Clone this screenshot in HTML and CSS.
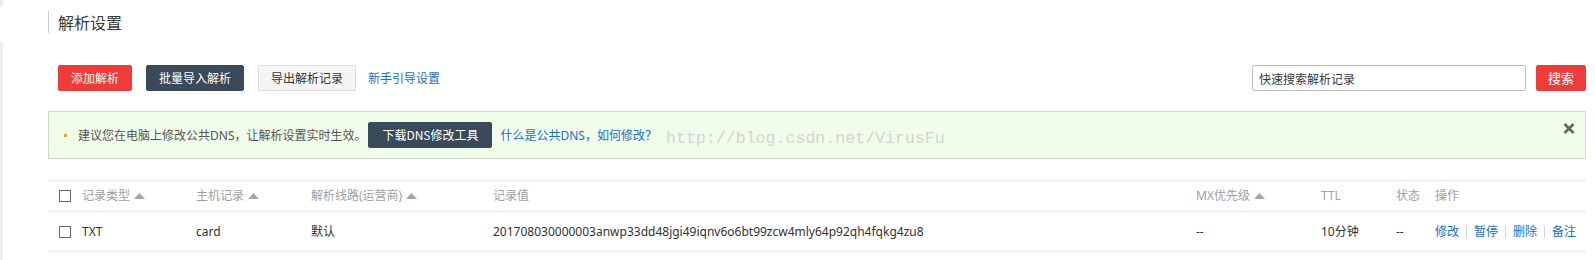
FILE: index.html
```html
<!DOCTYPE html>
<html lang="zh-CN">
<head>
<meta charset="utf-8">
<title>解析设置</title>
<link rel="stylesheet" href="styles.css">
</head>
<body>
<div class="frame">
  <div class="rail"><div class="rail-top"></div><div class="rail-bottom"></div></div>
  <main class="main">
    <h1 class="title">解析设置</h1>

    <div class="toolbar">
      <button class="btn btn-red">添加解析</button>
      <button class="btn btn-dark">批量导入解析</button>
      <button class="btn btn-light">导出解析记录</button>
      <a class="link guide">新手引导设置</a>
      <div class="search">
        <input class="search-input" type="text" placeholder="快速搜索解析记录">
        <button class="btn btn-red btn-search">搜索</button>
      </div>
    </div>

    <div class="alert">
      <span class="bullet"></span>
      <span class="alert-text">建议您在电脑上修改公共DNS，让解析设置实时生效。</span>
      <button class="btn btn-dark btn-tool">下载DNS修改工具</button>
      <a class="link alert-link">什么是公共DNS，如何修改？</a>
      <span class="watermark">http://blog.csdn.net/VirusFu</span>
      <span class="close">
        <svg width="12" height="11" viewBox="0 0 12 11"><path d="M1.5 1 L10.5 10 M10.5 1 L1.5 10" stroke="#666" stroke-width="2.6" stroke-linecap="butt"/></svg>
      </span>
    </div>

    <div class="table">
      <div class="row head">
        <div class="cell"><span class="check"></span></div>
        <div class="cell">记录类型<span class="sort"><svg width="11" height="6" viewBox="0 0 11 6"><path d="M0 6 L5.5 0 L11 6 Z" fill="#a6a6a6"/></svg></span></div>
        <div class="cell">主机记录<span class="sort"><svg width="11" height="6" viewBox="0 0 11 6"><path d="M0 6 L5.5 0 L11 6 Z" fill="#a6a6a6"/></svg></span></div>
        <div class="cell">解析线路(运营商)<span class="sort"><svg width="11" height="6" viewBox="0 0 11 6"><path d="M0 6 L5.5 0 L11 6 Z" fill="#a6a6a6"/></svg></span></div>
        <div class="cell">记录值</div>
        <div class="cell">MX优先级<span class="sort"><svg width="11" height="6" viewBox="0 0 11 6"><path d="M0 6 L5.5 0 L11 6 Z" fill="#a6a6a6"/></svg></span></div>
        <div class="cell">TTL</div>
        <div class="cell">状态</div>
        <div class="cell">操作</div>
      </div>
      <div class="row body">
        <div class="cell"><span class="check"></span></div>
        <div class="cell">TXT</div>
        <div class="cell">card</div>
        <div class="cell">默认</div>
        <div class="cell">201708030000003anwp33dd48jgi49iqnv6o6bt99zcw4mly64p92qh4fqkg4zu8</div>
        <div class="cell">--</div>
        <div class="cell">10分钟</div>
        <div class="cell">--</div>
        <div class="cell ops">
          <a class="link">修改</a><span class="sep"></span><a class="link">暂停</a><span class="sep"></span><a class="link">删除</a><span class="sep"></span><a class="link">备注</a>
        </div>
      </div>
    </div>
  </main>
</div>
</body>
</html>
```

FILE: styles.css
```css
* { box-sizing: border-box; }

html, body {
  margin: 0;
  padding: 0;
  background: #fff;
}

body {
  font-family: "Noto Sans", "Noto Sans CJK SC", sans-serif;
  font-size: 12px;
  color: #333;
  width: 1595px;
  height: 260px;
  overflow: hidden;
}

.frame {
  display: flex;
  height: 260px;
}

.rail {
  width: 3px;
  display: flex;
  flex-direction: column;
}

.rail-top {
  height: 7px;
  background: #efefef;
}

.rail-bottom {
  flex: 1;
  margin-top: 35px;
  background: #efefef;
}

.main {
  flex: 1;
  padding: 0 9px 0 45px;
}

.title {
  margin: 11px 0 0;
  height: 22px;
  line-height: 22px;
  border-left: 1px solid #cfcfcf;
  padding-left: 9px;
  font-size: 16px;
  font-weight: normal;
  color: #3a3a3a;
  font-family: "Noto Sans CJK SC", sans-serif;
}

.toolbar {
  margin-top: 32px;
  height: 26px;
  display: flex;
  align-items: center;
  padding-left: 10px;
}

.btn {
  height: 26px;
  border: 1px solid transparent;
  border-radius: 2px;
  font-family: "Noto Sans CJK SC", sans-serif;
  font-size: 12px;
  line-height: 24px;
  padding: 0;
  cursor: pointer;
}

.btn-red {
  background: #ef3b3a;
  border-color: #ef3b3a;
  color: #fff;
  width: 74px;
}

.btn-dark {
  background: #3b4a5b;
  border-color: #3b4a5b;
  color: #fff;
  width: 98px;
  margin-left: 14px;
}

.btn-light {
  background: #f5f5f5;
  border-color: #dcdcdc;
  color: #333;
  width: 98px;
  margin-left: 14px;
}

.link {
  color: #1a6ec9;
  font-family: "Noto Sans", "Noto Sans CJK SC", sans-serif;
  font-size: 12px;
  text-decoration: none;
  cursor: pointer;
}

.guide {
  margin-left: 12px;
}

.search {
  margin-left: auto;
  display: flex;
  align-items: center;
}

.search-input {
  width: 274px;
  height: 26px;
  border: 1px solid #bdbdbd;
  border-radius: 2px;
  padding: 0 6px;
  font-family: "Noto Sans CJK SC", sans-serif;
  font-size: 12px;
  color: #333;
  outline: none;
}

.search-input::placeholder {
  color: #3a3a3a;
  opacity: 1;
}

.btn-search {
  width: 50px;
  margin-left: 10px;
  font-size: 13px;
}

.alert {
  margin-top: 20px;
  height: 48px;
  background: #f0fdea;
  border: 1px solid #c9e1bf;
  display: flex;
  align-items: center;
  padding-left: 15px;
}

.bullet {
  width: 3px;
  height: 3px;
  background: #e2a323;
  margin-right: 11px;
}

.alert-text {
  color: #555;
  font-family: "Noto Sans", "Noto Sans CJK SC", sans-serif;
  font-size: 12px;
  white-space: nowrap;
}

.btn-tool {
  width: 124px;
  margin-left: 2px;
}

.alert-link {
  margin-left: 8px;
  white-space: nowrap;
}

.watermark {
  margin-left: 9px;
  margin-top: 7px;
  font-family: "Liberation Mono", "DejaVu Sans Mono", monospace;
  font-size: 16.6px;
  color: #d2d6ce;
  white-space: nowrap;
}

.close {
  margin-left: auto;
  margin-right: 10px;
  align-self: flex-start;
  margin-top: 11px;
  display: flex;
}

.table {
  margin-top: 21px;
}

.row {
  display: grid;
  grid-template-columns: 34px 114px 115px 182px 703px 125px 75px 39px 1fr;
  align-items: center;
  border-bottom: 1px solid #e3e3e3;
}

.row.head {
  border-top: 1px solid #e3e3e3;
  height: 32px;
  color: #a0a0a0;
}

.row.body {
  height: 40px;
  color: #333;
}

.cell {
  display: flex;
  align-items: center;
  white-space: nowrap;
  font-size: 12px;
  line-height: 16px;
}

.check {
  width: 12px;
  height: 12px;
  border: 1px solid #666;
  margin-left: 11px;
  background: #fff;
}

.sort {
  display: flex;
  margin-left: 4px;
}

.ops .sep {
  width: 1px;
  height: 12px;
  background: #d5d5d5;
  margin: 0 7px;
}
```
